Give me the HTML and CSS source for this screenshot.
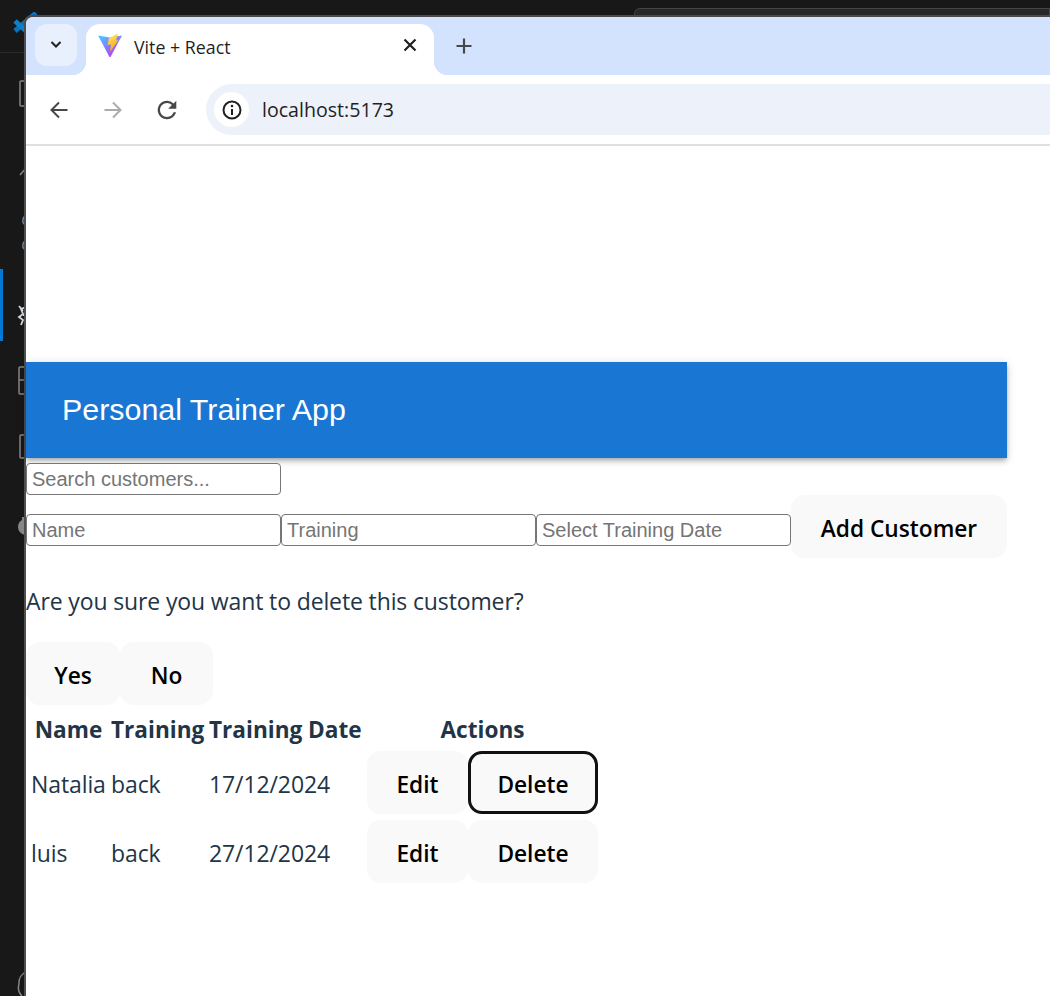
FILE: index.html
```html
<!DOCTYPE html>
<html lang="en">
<head>
<meta charset="utf-8">
<title>Vite + React</title>
<link rel="stylesheet" href="styles.css">
</head>
<body>
<div class="desktop">
  <div class="editor-title"></div>
  <div class="search-pill"></div>
  <svg class="vs-logo" width="26" height="24" viewBox="0 0 26 24"><path d="M3 19 L24 1" fill="none" stroke="#0a72b8" stroke-width="5"/><path d="M3 9 L14 19" fill="none" stroke="#0e7fc9" stroke-width="5"/></svg>
  <svg class="side-icons" width="26" height="996" viewBox="0 0 26 996">
    <rect x="0" y="269" width="3" height="72" fill="#0078d4"/>
    <g fill="none" stroke="#85858a" stroke-width="1.500">
      <path d="M26 81 H21 a1 1 0 0 0 -1 1 V105 a1 1 0 0 0 1 1 H26"/>
      <path d="M26 168 L20 175"/>
      <path d="M26 367 H20 a1 1 0 0 0 -1 1 V393 a1 1 0 0 0 1 1 H26 M19 380 H26"/>
      <path d="M26 435 H21 a1 1 0 0 0 -1 1 V457 a1 1 0 0 0 1 1 H26"/>
      <path d="M26 972 a12 12 0 0 0 -7 12 a12 12 0 0 0 3 12"/>
    </g>
    <path d="M26 216 a4 4 0 0 0 -3 4 a4 4 0 0 0 3 5 M26 241 a4 4 0 0 0 -3 4 a4 4 0 0 0 3 5" fill="none" stroke="#6d8599" stroke-width="1.500"/>
    <path d="M26 307 L21 309 L23 314 L19 317 L23 320 L21 325 M19 306 L23 311 M26 315 H23" fill="none" stroke="#cfd6dc" stroke-width="1.800"/>
    <path d="M26 517 V535 H25 a8 8 0 0 1 -7 -8 a8 8 0 0 1 4 -7 V517 Z" fill="#85858a"/>
  </svg>

  <main class="browser">
    <div class="tab-strip">
      <button class="tab-search" type="button" aria-label="Search tabs">
        <svg width="14" height="10" viewBox="0 0 14 10"><path d="M2.500 2 L7 6.500 L11.500 2" fill="none" stroke="#1f1f1f" stroke-width="2"/></svg>
      </button>
      <div class="tab">
        <svg class="favicon" width="26" height="25" viewBox="0 0 26 25">
          <defs>
            <linearGradient id="viteA" x1="0" y1="0" x2="0.7" y2="1"><stop offset="0" stop-color="#41d1ff"/><stop offset="1" stop-color="#bd34fe"/></linearGradient>
            <linearGradient id="viteB" x1="0" y1="0" x2="0.3" y2="1"><stop offset="0" stop-color="#ffea83"/><stop offset="1" stop-color="#ffa800"/></linearGradient>
          </defs>
          <path d="M1 2.500 L13 4.500 L25 2.500 L13.500 24 L12.500 24 Z" fill="url(#viteA)"/>
          <path d="M12 5 L21 0.500 L19 7.500 L21.500 7 L13 19 L14 11.500 L10.500 12 Z" fill="url(#viteB)"/>
        </svg>
        <span class="tab-title">Vite + React</span>
        <svg class="tab-close" width="14" height="14" viewBox="0 0 14 14"><path d="M1.500 1.500 L12.500 12.500 M12.500 1.500 L1.500 12.500" stroke="#1f1f1f" stroke-width="2.200"/></svg>
      </div>
      <svg class="new-tab" width="16" height="16" viewBox="0 0 16 16"><path d="M8 0.500 V15.500 M0.500 8 H15.500" stroke="#45484c" stroke-width="2.200"/></svg>
    </div>
    <div class="toolbar">
      <svg class="nav-icon" width="20" height="20" viewBox="0 0 20 20"><path d="M18.500 10 H2.500 M10 2.500 L2.500 10 L10 17.500" fill="none" stroke="#474747" stroke-width="2"/></svg>
      <svg class="nav-icon" width="20" height="20" viewBox="0 0 20 20"><path d="M1.500 10 H17.500 M10 2.500 L17.500 10 L10 17.500" fill="none" stroke="#ababab" stroke-width="2"/></svg>
      <svg class="nav-icon" width="20" height="20" viewBox="3.400 3.400 17.200 17.200"><path d="M17.650 6.350A7.958 7.958 0 0 0 12 4c-4.420 0-7.990 3.580-7.990 8s3.570 8 7.990 8c3.730 0 6.840-2.550 7.730-6h-2.080A5.990 5.990 0 0 1 12 18c-3.310 0-6-2.690-6-6s2.690-6 6-6c1.660 0 3.140.690 4.220 1.780L13 11h7V4l-2.350 2.350z" fill="#474747"/></svg>
      <div class="omnibox">
        <span class="info-chip">
          <svg width="20" height="20" viewBox="0 0 20 20"><circle cx="10" cy="10" r="8.500" fill="none" stroke="#1f1f1f" stroke-width="2"/><path d="M10 9 V15" stroke="#1f1f1f" stroke-width="2"/><circle cx="10" cy="6" r="1.300" fill="#1f1f1f"/></svg>
        </span>
        <span class="url">localhost:5173</span>
      </div>
    </div>

    <div class="page">
      <header class="app-bar"><h1>Personal Trainer App</h1></header>
      <div class="search-row"><input class="field" placeholder="Search customers..."></div>
      <div class="add-row">
        <input class="field" placeholder="Name">
        <input class="field" placeholder="Training">
        <input class="field" placeholder="Select Training Date">
        <button class="btn btn-add" type="button">Add Customer</button>
      </div>
      <p class="confirm">Are you sure you want to delete this customer?</p>
      <div class="confirm-actions">
        <button class="btn btn-yes" type="button">Yes</button>
        <button class="btn btn-no" type="button">No</button>
      </div>
      <table class="customers">
        <thead>
          <tr><th class="c-name">Name</th><th class="c-training">Training</th><th class="c-date">Training Date</th><th class="c-actions">Actions</th></tr>
        </thead>
        <tbody>
          <tr>
            <td class="t-name">Natalia</td><td>back</td><td>17/12/2024</td>
            <td class="actions"><div class="action-group"><button class="btn btn-edit" type="button">Edit</button><button class="btn btn-delete focused" type="button">Delete</button></div></td>
          </tr>
          <tr>
            <td class="t-name">luis</td><td>back</td><td>27/12/2024</td>
            <td class="actions"><div class="action-group"><button class="btn btn-edit" type="button">Edit</button><button class="btn btn-delete" type="button">Delete</button></div></td>
          </tr>
        </tbody>
      </table>
    </div>
  </main>
</div>
</body>
</html>
```
FILE: styles.css
```css
* { box-sizing: border-box; }
html, body { margin: 0; height: 100%; }
body { background: #181818; overflow: hidden; }
.desktop { position: relative; width: 1050px; height: 996px; overflow: hidden; background: #181818; }
.editor-title { position: absolute; left: 0; top: 52px; width: 26px; height: 1px; background: #2b2b2b; }
.search-pill { position: absolute; left: 634px; top: 8px; width: 416px; height: 12px; background: #282828; border: 1px solid #454545; border-radius: 6px 0 0 0; }
.vs-logo { position: absolute; left: 12px; top: 12px; }
.side-icons { position: absolute; left: 0; top: 0; }

.browser { position: absolute; left: 26px; top: 15px; width: 1024px; height: 981px; background: #fff; border-top: 2px solid #4a4a4a; border-top-left-radius: 8px; display: flex; flex-direction: column; box-shadow: -2px 0 0 #4f4f4f; }

.tab-strip { height: 58px; background: #d3e3fd; border-top-left-radius: 7px; display: flex; align-items: flex-start; flex: none; }
.tab-search { width: 42px; height: 42px; margin: 7px 0 0 9px; border: 0; border-radius: 12px; background: #e9f0fd; display: flex; align-items: center; justify-content: center; padding: 0; flex: none; }
.tab { position: relative; margin: 7px 0 0 9px; width: 348px; height: 51px; background: #fff; border-radius: 14px 14px 0 0; display: flex; align-items: flex-start; flex: none; }
.tab::before, .tab::after { content: ""; position: absolute; bottom: 0; width: 14px; height: 14px; background: #fff; }
.tab::before { left: -14px; -webkit-mask: radial-gradient(circle at 0 0, transparent 14px, #000 14.500px); mask: radial-gradient(circle at 0 0, transparent 14px, #000 14.500px); }
.tab::after { right: -14px; -webkit-mask: radial-gradient(circle at 100% 0, transparent 14px, #000 14.500px); mask: radial-gradient(circle at 100% 0, transparent 14px, #000 14.500px); }
.favicon { margin: 9px 0 0 11px; flex: none; }
.tab-title { margin: 12px 0 0 11px; font: 17.800px/22px "Open Sans", "Noto Sans", sans-serif; color: #1f1f1f; flex: 1; }
.tab-close { margin: 14px 17px 0 0; flex: none; }
.new-tab { margin: 21px 0 0 22px; flex: none; }

.toolbar { height: 71px; flex: none; background: #fff; border-top-left-radius: 14px; border-bottom: 2px solid #dfdfdf; display: flex; align-items: center; padding-left: 23px; position: relative; z-index: 1; }
.nav-icon { margin-right: 34px; flex: none; }
.nav-icon:last-of-type { margin-right: 29px; }
.omnibox { flex: 1; height: 51px; background: #edf2fa; border-radius: 26px 0 0 26px; display: flex; align-items: center; padding-left: 8px; }
.info-chip { width: 35px; height: 35px; border-radius: 50%; background: #fff; display: flex; align-items: center; justify-content: center; flex: none; }
.url { margin-left: 13px; font: 19.600px/24px "Open Sans", "Noto Sans", sans-serif; color: #1f1f1f; }

.page { flex: 1; font-family: "Open Sans", "Noto Sans", sans-serif; color: #213547; padding-top: 216px; }
.app-bar { width: 981px; height: 96px; background: #1976d2; box-shadow: 0 2px 4px -1px rgba(0,0,0,.2), 0 4px 5px 0 rgba(0,0,0,.14), 0 1px 10px 0 rgba(0,0,0,.12); display: flex; align-items: center; padding-left: 36px; }
.app-bar h1 { margin: -2px 0 0; font: 400 30.400px/36px "Liberation Sans", Arial, sans-serif; color: #fff; }
.search-row { margin-top: 5px; height: 32px; display: flex; }
.field { width: 255px; height: 32px; padding: 1px 5px; border: 1px solid #767676; border-radius: 4px; background: #fff; font: 20px/1.2 "Liberation Sans", Arial, sans-serif; color: #213547; flex: none; }
.field::placeholder { color: #757575; opacity: 1; }
.add-row { width: 981px; display: flex; align-items: flex-start; height: 63px; }
.add-row .field { margin-top: 19px; }
.btn { height: 63px; border: 0; border-radius: 14px; background: #f9f9f9; color: #000; font: 600 22.700px/30px "Open Sans", "Noto Sans", sans-serif; padding: 4px 0 0; flex: none; }
.btn-add { width: 216px; }
.confirm { margin: 29px 0 26px; font-size: 23px; letter-spacing: -0.130px; line-height: 28px; height: 29px; white-space: nowrap; }
.confirm-actions { display: flex; height: 63px; }
.btn-yes { width: 94px; }
.btn-no { width: 93px; }
.customers { border-collapse: separate; border-spacing: 0; table-layout: fixed; width: 572px; margin-top: 5px; }
.customers th, .customers td { padding: 0; text-align: left; white-space: nowrap; }
.customers th { height: 38px; font-size: 22.600px; font-weight: 700; color: #213547; text-align: center; }
.customers td { height: 69px; padding-top: 3px; font-size: 23px; letter-spacing: -0.100px; }
.customers td.t-name { padding-left: 5px; }
.customers th.c-name { width: 85px; }
.customers th.c-training { width: 98px; padding-right: 6px; }
.customers th.c-date { width: 158px; padding-right: 6px; }
.customers th.c-actions { width: 231px; }
.customers td.actions { padding: 0; }
.action-group { display: flex; align-items: center; }
.btn-edit { width: 101px; }
.btn-delete { width: 130px; }
.focused { outline: 0; border: 3px solid #111; background: #f9f9f9; }
```
